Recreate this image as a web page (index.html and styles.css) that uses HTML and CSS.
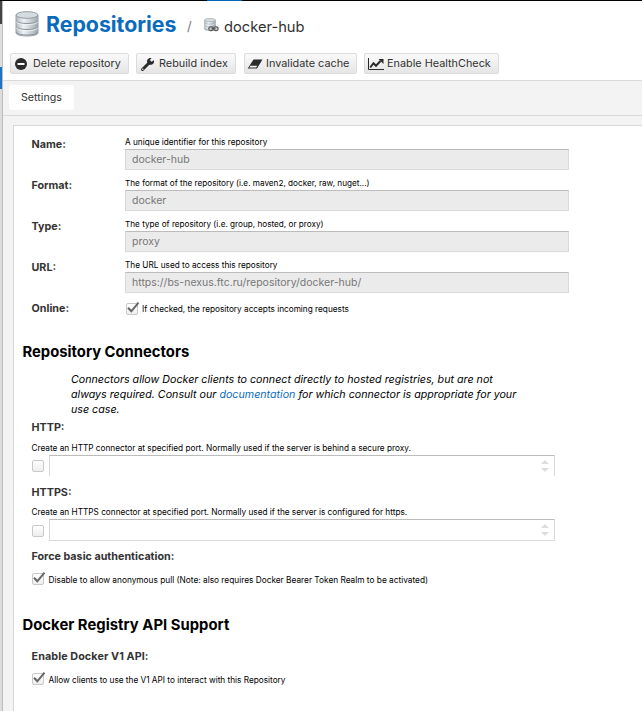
FILE: index.html
```
<!DOCTYPE html>
<html lang="en">
<head>
<meta charset="utf-8">
<title>Repositories / docker-hub</title>
<link rel="stylesheet" href="styles.css">
</head>
<body>
<svg width="0" height="0" class="defs" aria-hidden="true">
  <defs>
    <linearGradient id="metal"><stop offset="0" stop-color="#b3bbc2"/><stop offset=".35" stop-color="#eef2f5"/><stop offset="1" stop-color="#9fa8af"/></linearGradient>
    <symbol id="db" viewBox="0 0 24 26">
      <path d="M1 4v18c0 4 22 4 22 0V4z" fill="url(#metal)" stroke="#9ba1a6"/>
      <path d="M1.500 9.500c0 4 21 4 21 0M1.500 15.500c0 4 21 4 21 0M1.500 21c0 4 21 4 21 0" fill="none" stroke="#8b959d"/>
      <path d="M1.500 10.700c0 4 21 4 21 0M1.500 16.700c0 4 21 4 21 0" fill="none" stroke="#f5f8fa" stroke-width=".8"/>
      <ellipse cx="12" cy="4" rx="11" ry="3.300" fill="#d5dce1" stroke="#959ca2"/>
    </symbol>
    <symbol id="check" viewBox="0 0 14 14"><path d="M2 6.800l3.300 3.500L12.500 1.700" fill="none" stroke="#666" stroke-width="2"/></symbol>
  </defs>
</svg>
<div class="topbar"><span class="topbar-active"></span></div>
<div class="app">
  <div class="rail"><span class="rail-dark"></span><span class="rail-gap"></span><span class="rail-active"></span></div>
  <main class="content">
    <header class="crumbs">
      <svg class="icon-db"><use href="#db"/></svg>
      <h1>Repositories</h1>
      <span class="slash">/</span>
      <svg class="icon-proxy" viewBox="0 0 15 14">
        <use href="#db" width="12" height="13"/>
        <g fill="#ccc" stroke="#5a5a5a" stroke-width="1.200"><rect x="4.800" y="8.800" width="4.300" height="3.800" rx="1.500"/><rect x="9.800" y="8.800" width="4.300" height="3.800" rx="1.500"/></g>
        <path d="M7.500 10.700h4" stroke="#555" stroke-width="1.200"/>
      </svg>
      <span class="crumb">docker-hub</span>
    </header>
    <div class="toolbar">
      <button class="btn btn-delete"><svg viewBox="0 0 16 16"><circle cx="7" cy="8" r="6" fill="#2b2b2b"/><path d="M3.500 8h7" stroke="#fff" stroke-width="2"/></svg>Delete repository</button>
      <button class="btn btn-rebuild"><svg viewBox="0 0 16 16"><path d="M2.500 13.500L8.500 7.500" stroke="#2b2b2b" stroke-width="3" stroke-linecap="round"/><path d="M13.900 4.200l-2.400 1.500-1.600-1.600L11.600 2C8.200 1.300 6.300 4 7.300 6.800L9.200 8.700C12.500 9.400 14.700 7 13.900 4.200z" fill="#2b2b2b"/><circle cx="2.800" cy="13.200" r=".8" fill="#eee"/></svg>Rebuild index</button>
      <button class="btn btn-cache"><svg viewBox="0 0 16 16"><path d="M6.500 3.500h9L10 12.500H.700z" fill="#2b2b2b"/><path d="M3.400 9.700h6.900L9.100 11.500H2.300z" fill="#f1f1f1"/></svg>Invalidate cache</button>
      <button class="btn btn-health"><svg viewBox="0 0 16 16"><path d="M.500 2v11.500H16" fill="none" stroke="#2b2b2b"/><path d="M2.200 11.500l3.300-4.300 2.500 2.500L12.500 5" fill="none" stroke="#2b2b2b" stroke-width="2"/><path d="M10.500 3h5v5z" fill="#2b2b2b"/></svg>Enable HealthCheck</button>
    </div>
    <nav class="tabs"><span class="tab">Settings</span></nav>
    <section class="panel">
      <div class="row"><label>Name:</label><div class="field"><p class="help">A unique identifier for this repository</p><div class="input">docker-hub</div></div></div>
      <div class="row"><label>Format:</label><div class="field"><p class="help help-format">The format of the repository (i.e. maven2, docker, raw, nuget...)</p><div class="input">docker</div></div></div>
      <div class="row"><label>Type:</label><div class="field"><p class="help help-format">The type of repository (i.e. group, hosted, or proxy)</p><div class="input">proxy</div></div></div>
      <div class="row"><label>URL:</label><div class="field"><p class="help">The URL used to access this repository</p><div class="input">https://bs-nexus.ftc.ru/repository/docker-hub/</div></div></div>
      <div class="row"><label>Online:</label><div class="check"><span class="box"><svg><use href="#check"/></svg></span><span class="help">If checked, the repository accepts incoming requests</span></div></div>

      <h2>Repository Connectors</h2>
      <p class="info">Connectors allow Docker clients to connect directly to hosted registries, but are not<br>always required. Consult our <a>documentation</a> for which connector is appropriate for your<br>use case.</p>
      <div class="group group-http">
        <label>HTTP:</label>
        <p class="help">Create an HTTP connector at specified port. Normally used if the server is behind a secure proxy.</p>
        <div class="port"><span class="box"></span><div class="number number-cut"><svg class="spin" viewBox="0 0 8 12"><path d="M0 4l4-4 4 4zM0 8h8l-4 4z" fill="#dedede"/></svg></div></div>
      </div>
      <div class="group group-https">
        <label>HTTPS:</label>
        <p class="help">Create an HTTPS connector at specified port. Normally used if the server is configured for https.</p>
        <div class="port"><span class="box"></span><div class="number"><svg class="spin" viewBox="0 0 8 12"><path d="M0 4l4-4 4 4zM0 8h8l-4 4z" fill="#dedede"/></svg></div></div>
      </div>
      <div class="group group-auth">
        <label>Force basic authentication:</label>
        <div class="check"><span class="box"><svg><use href="#check"/></svg></span><span class="help help-auth">Disable to allow anonymous pull (Note: also requires Docker Bearer Token Realm to be activated)</span></div>
      </div>
      <h2 class="api-title">Docker Registry API Support</h2>
      <div class="group group-api">
        <label>Enable Docker V1 API:</label>
        <div class="check"><span class="box"><svg><use href="#check"/></svg></span><span class="help">Allow clients to use the V1 API to interact with this Repository</span></div>
      </div>
    </section>
  </main>
</div>
</body>
</html>
```
FILE: styles.css
```
* { box-sizing: border-box; }
body { margin: 0; height: 711px; overflow: hidden; background: #f3f3f3; color: #000; font-family: Inter, "Liberation Sans", sans-serif; }
h1, h2, p { margin: 0; }
svg { display: block; flex: none; }
.defs { position: absolute; }

.topbar { height: 1px; background: #000; padding-left: 207px; }
.topbar-active { display: block; width: 35px; height: 1px; background: #0067b8; }
.app { display: flex; height: 710px; }
.rail { width: 3px; flex: none; background: #dcdcdc; border-right: 1px solid #bdbdbd; display: flex; flex-direction: column; }
.rail-dark { height: 23px; background: #444; }
.rail-gap { height: 43px; }
.rail-active { height: 22px; background: #1c75c4; }
.content { flex: 1; display: flex; flex-direction: column; min-width: 0; }

.crumbs { height: 49px; background: #fff; display: flex; align-items: flex-start; padding-left: 12px; flex: none; }
.icon-db { width: 24px; height: 26px; margin-top: 10px; }
h1 { margin: 8px 0 0 7px; font-size: 21.3px; line-height: 30px; font-weight: 700; color: #0a6bbd; width: 131px; white-space: nowrap; }
.slash { margin: 14px 0 0 10px; font-size: 13px; line-height: 22px; color: #777; width: 6px; }
.icon-proxy { width: 15px; height: 14px; margin: 17px 0 0 11px; }
.crumb { margin: 15px 0 0 5px; font-size: 14.7px; line-height: 22px; color: #333; white-space: nowrap; }

.toolbar { flex: none; height: 31px; background: #fff; display: flex; padding: 3px 0 0 7px; gap: 7px; border-bottom: 1px solid #dadada; }
.btn { height: 21px; border: 1px solid #dcdcdc; border-radius: 2px; background: linear-gradient(#fafafa, #e5e5e5); font: 10.85px/18px Inter, sans-serif; color: #333; padding: 0 0 1px 3px; display: flex; align-items: center; gap: 3px; white-space: nowrap; }
.btn svg { width: 16px; height: 16px; margin-top: 1px; }
.btn-delete { width: 119px; }
.btn-rebuild { width: 100px; }
.btn-cache { width: 113px; margin-left: 1px; padding-left: 2px; }
.btn-health { width: 135px; }

.tabs { height: 35px; flex: none; border-bottom: 1px solid #dadada; padding: 4px 0 0 6px; }
.tab { display: block; width: 65px; height: 25px; border-radius: 3px; background: #fff; color: #333; font-size: 10.7px; line-height: 25px; padding-left: 12px; }

.panel { flex: 1; margin: 9px 0 0 10px; background: #fff; border: solid #d6d6d6; border-width: 1px 0 0 1px; padding: 10px 0 0 9px; }
label { display: block; color: #333; font-size: 10.75px; line-height: 14px; font-weight: 700; }
.help { font-size: 8.24px; line-height: 12px; white-space: nowrap; }
.help-format { font-size: 8.18px; }
.help-auth { font-size: 8.31px; }
.row { display: flex; height: 41px; padding-left: 9px; }
.row label { width: 93px; padding-top: 2px; flex: none; margin-left: -0.5px; margin-right: 0.5px; }
.field { width: 444px; }
.input { height: 21px; margin-top: 1px; border: 1px solid #d9d9d9; border-top-color: #bcbcbc; background: #ebebeb; color: #777; font-size: 10.5px; line-height: 19px; padding-left: 6px; }
.check { display: flex; align-items: center; gap: 5px; height: 14px; }
.box { width: 12px; height: 12px; flex: none; border: 1px solid #c9c9c9; border-radius: 2px; background: linear-gradient(#fff, #eee); }
.box svg { width: 14px; height: 14px; margin: -3px 0 0 -1px; }
.row .check { margin-top: 2px; padding-left: 1px; gap: 4px; }

h2 { margin-top: 1px; font-size: 14.8px; line-height: 20px; font-weight: 700; margin-left: -0.5px; }
.info { margin: 10px 0 0 48px; font-size: 10.7px; line-height: 15px; font-style: italic; white-space: nowrap; }
.info a { color: #0a6bbd; }
.group { padding-left: 8.5px; }
.group > .help { margin: 7px 0 1px; }
.group-http { padding-top: 4px; }
.group-https { padding-top: 10px; }
.group-https > .help { margin-top: 6px; }
.group-auth { padding-top: 9px; }
.group .check { margin-top: 8px; }
.group .check .help { padding-top: 1px; }
.group-api .check { margin-top: 8px; }
.group-api label { letter-spacing: 0.1px; }
.port { display: flex; gap: 5px; padding-left: 0.5px; }
.port .box { margin-top: 5px; }
.group-https .box { margin-top: 6px; }
.number { width: 506px; height: 22px; border: 1px solid #d9d9d9; border-top-color: #bcbcbc; display: flex; justify-content: flex-end; padding: 4px 5px 0 0; }
.number-cut { height: 21px; border-bottom: 0; }
.spin { width: 8px; height: 12px; }
.api-title { margin-top: 29px; margin-bottom: 15px; letter-spacing: 0.04px; }
```
